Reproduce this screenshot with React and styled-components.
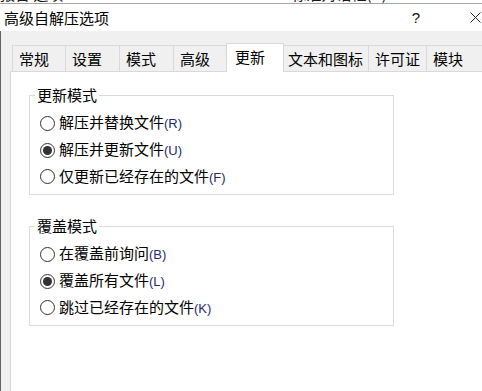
import React, { useState } from "react";
import styled, { createGlobalStyle } from "styled-components";

const GlobalStyle = createGlobalStyle`
  html, body {
    margin: 0;
    padding: 0;
    background: #ffffff;
  }
  body {
    font-family: "Noto Sans CJK SC", "Microsoft YaHei", sans-serif;
    color: #000;
  }
  #root {
    width: 482px;
    height: 391px;
    overflow: hidden;
  }
`;

const Page = styled.div`
  width: 482px;
  height: 391px;
  display: flex;
  flex-direction: column;
  overflow: hidden;
`;

const BehindStrip = styled.div`
  height: 3px;
  overflow: hidden;
  display: flex;
  background: #fff;
`;

const BehindText = styled.span`
  font-size: 15px;
  line-height: 18px;
  margin-top: -15px;
  margin-left: ${(p) => p.$left}px;
  color: #1a1a1a;
  white-space: nowrap;
`;

const Window = styled.div`
  flex: 1;
  display: flex;
  flex-direction: column;
  border-top: 1px solid #a6a6a6;
  min-height: 0;
`;

const TitleBar = styled.div`
  height: 27px;
  display: flex;
  align-items: center;
  padding-left: 4px;
  background: #fff;
`;

const Title = styled.span`
  font-size: 15px;
  line-height: 18px;
  white-space: nowrap;
`;

const HelpButton = styled.span`
  margin-left: auto;
  font-family: "Liberation Sans", Arial, sans-serif;
  font-size: 15px;
  line-height: 18px;
  color: #111;
`;

const CloseButton = styled.span`
  display: flex;
  margin-left: 50px;
  margin-right: 1px;
`;

const Body = styled.div`
  flex: 1;
  display: flex;
  flex-direction: column;
  background: #f0f0f0;
  border-left: 1px solid #646464;
  padding: 12px 0 0 9px;
  min-height: 0;
`;

const TabStrip = styled.div`
  height: 28px;
  display: flex;
  align-items: flex-end;
  padding-left: 2px;
  position: relative;
  z-index: 1;
`;

const Tab = styled.div`
  box-sizing: border-box;
  flex: none;
  width: ${(p) => p.$width}px;
  height: ${(p) => (p.$active ? 29 : 26)}px;
  margin-left: ${(p) => (p.$first ? 0 : p.$active ? -3 : -1)}px;
  margin-right: ${(p) => (p.$active ? -2 : 0)}px;
  margin-bottom: ${(p) => (p.$active ? -1 : 0)}px;
  padding: ${(p) => (p.$active ? "0 0 2px 8px" : "0 0 0 6px")};
  display: flex;
  align-items: center;
  background: ${(p) => (p.$active ? "#ffffff" : "#f0f0f0")};
  border: 1px solid #d9d9d9;
  border-bottom: none;
  position: relative;
  z-index: ${(p) => (p.$active ? 2 : 1)};
  font-size: 15px;
  line-height: 18px;
  white-space: nowrap;
  cursor: default;
`;

const Panel = styled.div`
  flex: 1;
  background: #fff;
  border-top: 1px solid #d9d9d9;
  border-left: 1px solid #d9d9d9;
  padding: 14px 0 0 18px;
`;

const GroupBox = styled.fieldset`
  box-sizing: border-box;
  width: 365px;
  min-width: 0;
  margin: ${(p) => (p.$spaced ? "22px 0 0 0" : "0")};
  padding: 0 0 4px 5px;
  border: 1px solid #dcdcdc;
`;

const GroupTitle = styled.legend`
  padding: 0 2px;
  font-size: 15px;
  line-height: 18px;
`;

const RadioList = styled.div`
  padding-top: 6px;
  display: flex;
  flex-direction: column;
`;

const RadioRow = styled.label`
  height: 26.7px;
  display: flex;
  align-items: center;
  padding-left: 5px;
  gap: 4px;
  cursor: default;
`;

const RadioCircle = styled.span`
  box-sizing: border-box;
  width: 15px;
  height: 15px;
  border-radius: 50%;
  border: 1px solid #333;
  background: #fff;
  display: flex;
  align-items: center;
  justify-content: center;
  flex: none;

  &::after {
    content: "";
    width: 9px;
    height: 9px;
    border-radius: 50%;
    background: ${(p) => (p.$checked ? "#333" : "transparent")};
  }
`;

const RadioText = styled.span`
  font-size: 15px;
  line-height: 18px;
  white-space: nowrap;
`;

const HotKey = styled.span`
  font-family: "Liberation Sans", Arial, sans-serif;
  font-size: 13px;
  color: #1e2a6a;
`;

const tabs = [
  { label: "常规", width: 54 },
  { label: "设置", width: 55 },
  { label: "模式", width: 55 },
  { label: "高级", width: 56 },
  { label: "更新", width: 58 },
  { label: "文本和图标", width: 88 },
  { label: "许可证", width: 59 },
  { label: "模块", width: 61 },
];

const groups = [
  {
    title: "更新模式",
    options: [
      { text: "解压并替换文件", key: "R" },
      { text: "解压并更新文件", key: "U" },
      { text: "仅更新已经存在的文件", key: "F" },
    ],
    initial: 1,
  },
  {
    title: "覆盖模式",
    options: [
      { text: "在覆盖前询问", key: "B" },
      { text: "覆盖所有文件", key: "L" },
      { text: "跳过已经存在的文件", key: "K" },
    ],
    initial: 1,
  },
];

const RadioGroup = ({ group, spaced }) => {
  const [picked, setPicked] = useState(group.initial);
  return (
    <GroupBox $spaced={spaced}>
      <GroupTitle>{group.title}</GroupTitle>
      <RadioList>
        {group.options.map((opt, i) => (
          <RadioRow key={opt.key} onClick={() => setPicked(i)}>
            <RadioCircle $checked={picked === i} />
            <RadioText>
              {opt.text}
              <HotKey>({opt.key})</HotKey>
            </RadioText>
          </RadioRow>
        ))}
      </RadioList>
    </GroupBox>
  );
};

const App = () => {
  const [active, setActive] = useState(4);

  return (
    <Page>
      <GlobalStyle />
      <BehindStrip>
        <BehindText $left={0}>报告 选项</BehindText>
        <BehindText $left={228}>标准对话框(D)</BehindText>
      </BehindStrip>
      <Window>
        <TitleBar>
          <Title>高级自解压选项</Title>
          <HelpButton>?</HelpButton>
          <CloseButton>
            <svg width="11" height="11" viewBox="0 0 11 11">
              <path d="M0.5 0.5 L10.5 10.5 M10.5 0.5 L0.5 10.5" stroke="#222" strokeWidth="1" fill="none" />
            </svg>
          </CloseButton>
        </TitleBar>
        <Body>
          <TabStrip>
            {tabs.map((t, i) => (
              <Tab
                key={t.label}
                $width={t.width}
                $first={i === 0}
                $active={i === active}
                onClick={() => setActive(i)}
              >
                {t.label}
              </Tab>
            ))}
          </TabStrip>
          <Panel>
            {groups.map((g, i) => (
              <RadioGroup key={g.title} group={g} spaced={i > 0} />
            ))}
          </Panel>
        </Body>
      </Window>
    </Page>
  );
};

export default App;
